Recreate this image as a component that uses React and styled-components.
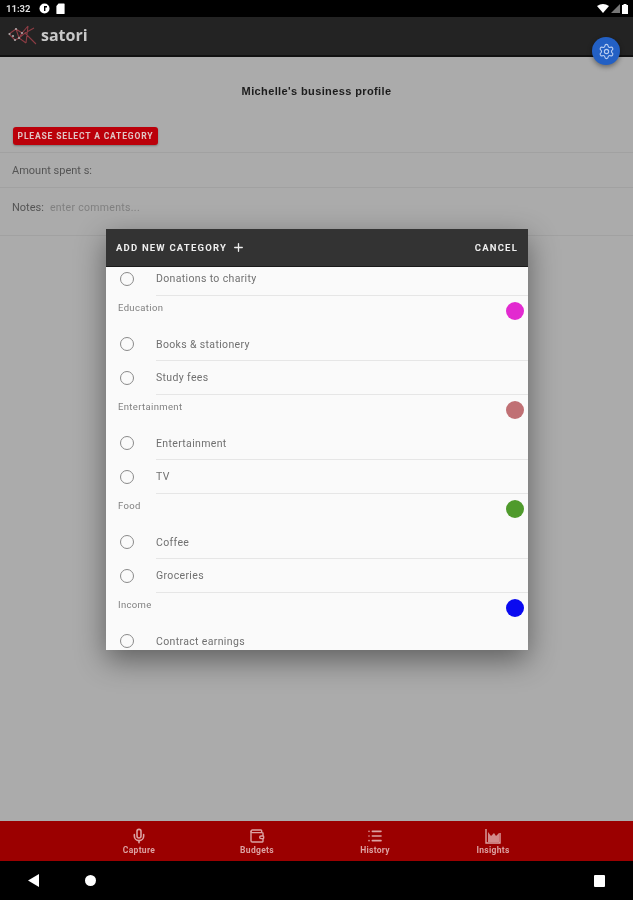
import React from 'react';
import styled, { createGlobalStyle } from 'styled-components';
import { Mic, Wallet, List, Settings, Plus } from 'lucide-react';

const GlobalStyle = createGlobalStyle`
  html, body { margin: 0; padding: 0; background: #000; }
  body { font-family: Roboto, "Liberation Sans", sans-serif; }
  * { box-sizing: border-box; }
`;

const categories = [
  { name: 'Education', color: '#e22ad0', items: ['Books & stationery', 'Study fees'] },
  { name: 'Entertainment', color: '#c07074', items: ['Entertainment', 'TV'] },
  { name: 'Food', color: '#4f9a2c', items: ['Coffee', 'Groceries'] },
  { name: 'Income', color: '#0a0af0', items: ['Contract earnings'] },
];

const navItems = [
  { label: 'Capture', icon: <Mic size={16} strokeWidth={2.4} /> },
  { label: 'Budgets', icon: <Wallet size={16} strokeWidth={2.1} /> },
  { label: 'History', icon: <List size={16} strokeWidth={2.4} /> },
  { label: 'Insights', icon: <InsightsIcon /> },
];

function InsightsIcon() {
  return (
    <svg width="16" height="16" viewBox="0 0 16 16" fill="none">
      <path d="M1 1v14h14V5" stroke="currentColor" strokeWidth="1.4" />
      <path d="M3 14V4l3 4 3-3 2 3 3-3v9z" fill="currentColor" opacity="0.85" />
    </svg>
  );
}

function Logo() {
  return (
    <svg width="29" height="20" viewBox="0 0 29 20" fill="none">
      <g stroke="#8c3c44" strokeWidth="1.1">
        <path d="M1 9l7-5 6 4 6-7M8 4l3 9 7 5M1 9l6 6 4-2 6-5 11 11M14 8l-3 5M20 1l-2 17M17 8l9-5" />
      </g>
      <g fill="#a8a8a8">
        <circle cx="1.5" cy="9" r="1.1" />
        <circle cx="8" cy="4" r="1.1" />
        <circle cx="7" cy="15" r="1.1" />
        <circle cx="14" cy="8" r="1.1" />
        <circle cx="11" cy="13" r="1.1" />
        <circle cx="5" cy="11" r="1.1" />
      </g>
    </svg>
  );
}

export default function App() {
  return (
    <Screen>
      <GlobalStyle />
      <StatusBar>
        <StatusGroup $gap={6}>
          <Clock>11:32</Clock>
          <svg width="11" height="11" viewBox="0 0 11 11">
            <circle cx="5.5" cy="5.5" r="5" fill="#fff" />
            <path d="M5 3h3v1.6H6.4V8H5z" fill="#000" />
          </svg>
          <svg width="9" height="11" viewBox="0 0 9 11">
            <path d="M2.5 0.5H8a.6.6 0 0 1 .6.6v9.3a.6.6 0 0 1-.6.6H1a.6.6 0 0 1-.6-.6V3z" fill="#fff" />
          </svg>
        </StatusGroup>
        <StatusGroup $gap={2}>
          <svg width="12" height="9" viewBox="0 0 12 9">
            <path d="M0 2Q6-2 12 2L6 9z" fill="#fff" />
          </svg>
          <svg width="9" height="9" viewBox="0 0 9 9">
            <path d="M9 0v9H0z" fill="#777" />
          </svg>
          <svg width="6" height="10" viewBox="0 0 6 10">
            <path d="M1.5 0h3v1H6v9H0V1h1.5z" fill="#fff" />
          </svg>
        </StatusGroup>
      </StatusBar>

      <AppBar>
        <Logo />
        <Brand>satori</Brand>
      </AppBar>
      <Fab><Settings size={17} strokeWidth={1.6} /></Fab>

      <Content>
        <ProfileTitle>Michelle's business profile</ProfileTitle>
        <CategoryRow>
          <CategoryButton>Please select a category</CategoryButton>
        </CategoryRow>
        <FieldRow $height={35} $top={11}>
          <FieldLabel>Amount spent s:</FieldLabel>
        </FieldRow>
        <FieldRow $height={48} $top={13}>
          <FieldLabel>Notes:</FieldLabel>
          <Placeholder>enter comments...</Placeholder>
        </FieldRow>

        <Dialog>
          <DialogHeader>
            <HeaderAction>
              Add new category <Plus size={13} strokeWidth={2.4} />
            </HeaderAction>
            <HeaderAction>Cancel</HeaderAction>
          </DialogHeader>
          <CategoryList>
            <Row>
              <Radio />
              <RowText>Donations to charity</RowText>
            </Row>
            {categories.map((cat) => (
              <React.Fragment key={cat.name}>
                <SectionHeader>
                  <SectionLabel>{cat.name}</SectionLabel>
                  <Dot $color={cat.color} />
                </SectionHeader>
                {cat.items.map((item) => (
                  <Row key={item}>
                    <Radio />
                    <RowText>{item}</RowText>
                  </Row>
                ))}
              </React.Fragment>
            ))}
          </CategoryList>
        </Dialog>
      </Content>

      <BottomNav>
        {navItems.map((item) => (
          <NavItem key={item.label}>
            {item.icon}
            <NavLabel>{item.label}</NavLabel>
          </NavItem>
        ))}
      </BottomNav>

      <SystemBar>
        <SystemGroup>
          <svg width="11" height="13" viewBox="0 0 11 13">
            <path d="M11 0v13L0 6.5z" fill="#fff" />
          </svg>
          <HomeDot />
        </SystemGroup>
        <RecentSquare />
      </SystemBar>
    </Screen>
  );
}

const Screen = styled.div`
  position: relative;
  width: 633px;
  height: 900px;
  display: flex;
  flex-direction: column;
  overflow: hidden;
  background: #000;
  filter: blur(0.6px);
`;

const StatusBar = styled.div`
  height: 17px;
  flex: none;
  display: flex;
  align-items: center;
  justify-content: space-between;
  padding: 0 5px 0 6px;
  background: #000;
`;

const StatusGroup = styled.div`
  display: flex;
  align-items: center;
  gap: ${(p) => p.$gap}px;
  &:first-child svg:first-of-type { margin-left: 3px; }
`;

const Clock = styled.span`
  color: #ddd;
  font-size: 9.5px;
  font-weight: 700;
`;

const AppBar = styled.div`
  height: 40px;
  flex: none;
  display: flex;
  align-items: center;
  gap: 4px;
  padding: 0 0 3px 8px;
  background: #232323;
  border-bottom: 2px solid #111;
`;

const Brand = styled.span`
  font-family: "Open Sans", sans-serif;
  font-size: 16px;
  font-weight: 700;
  color: #c8c8c8;
`;

const Fab = styled.div`
  position: absolute;
  left: 592px;
  top: 37px;
  width: 28px;
  height: 28px;
  border-radius: 50%;
  display: flex;
  align-items: center;
  justify-content: center;
  color: #b9cdf0;
  background: #2360c4;
  box-shadow: 0 2px 5px rgba(0, 0, 0, 0.4);
  z-index: 3;
`;

const Content = styled.div`
  position: relative;
  flex: 1;
  background: #ababab;
`;

const ProfileTitle = styled.div`
  height: 70px;
  padding-top: 28px;
  text-align: center;
  font-family: "Liberation Sans", sans-serif;
  font-size: 11px;
  font-weight: 700;
  letter-spacing: 0.38px;
  color: #1c1c1c;
`;

const CategoryRow = styled.div`
  height: 26px;
  padding-left: 13px;
  border-bottom: 1px solid #a1a1a1;
`;

const CategoryButton = styled.div`
  width: 145px;
  height: 18px;
  display: flex;
  align-items: center;
  justify-content: center;
  border-radius: 3px;
  background: #bb000a;
  color: #e0c4c4;
  font-size: 8.5px;
  font-weight: 700;
  letter-spacing: 0.85px;
  text-transform: uppercase;
  box-shadow: 0 1px 2px rgba(0, 0, 0, 0.3);
`;

const FieldRow = styled.div`
  height: ${(p) => p.$height}px;
  display: flex;
  align-items: flex-start;
  gap: 6px;
  padding: ${(p) => p.$top}px 0 0 12px;
  border-bottom: 1px solid #a1a1a1;
`;

const FieldLabel = styled.span`
  font-size: 11px;
  line-height: 13px;
  color: #555;
`;

const Placeholder = styled.span`
  font-size: 10.5px;
  line-height: 13px;
  letter-spacing: 0.3px;
  color: #808080;
`;

const Dialog = styled.div`
  position: absolute;
  left: 106px;
  top: 172px;
  width: 422px;
  height: 421px;
  display: flex;
  flex-direction: column;
  overflow: hidden;
  background: #fafafa;
  box-shadow: 0 10px 28px rgba(0, 0, 0, 0.45);
`;

const DialogHeader = styled.div`
  height: 38px;
  flex: none;
  display: flex;
  align-items: center;
  justify-content: space-between;
  padding: 0 10px;
  background: #333;
  border-bottom: 1px solid #1a1a1a;
`;

const HeaderAction = styled.span`
  display: flex;
  align-items: center;
  gap: 5px;
  color: #eee;
  font-size: 9.5px;
  font-weight: 700;
  letter-spacing: 1.2px;
  text-transform: uppercase;
`;

const CategoryList = styled.div`
  margin-top: -5px;
`;

const Row = styled.div`
  position: relative;
  height: 33.5px;
  flex: none;
  display: flex;
  align-items: center;
  padding-left: 14px;
  &::after {
    content: '';
    position: absolute;
    left: 50px;
    right: 0;
    bottom: 0;
    border-bottom: 1px solid #e6e6e6;
  }
`;

const Radio = styled.span`
  width: 14px;
  height: 14px;
  flex: none;
  border: 1.4px solid #8a8a8a;
  border-radius: 50%;
`;

const RowText = styled.span`
  margin-left: 22px;
  font-size: 10.5px;
  letter-spacing: 0.35px;
  color: #707070;
`;

const SectionHeader = styled.div`
  height: 32px;
  display: flex;
  justify-content: space-between;
  padding: 6px 4px 0 12px;
`;

const SectionLabel = styled.span`
  font-size: 9.5px;
  letter-spacing: 0.35px;
  line-height: 12px;
  color: #808080;
`;

const Dot = styled.span`
  width: 18px;
  height: 18px;
  border-radius: 50%;
  background: ${(p) => p.$color};
`;

const BottomNav = styled.div`
  height: 40px;
  flex: none;
  display: grid;
  grid-template-columns: repeat(4, 118px);
  padding-left: 80px;
  background: #9b0000;
`;

const NavItem = styled.div`
  display: flex;
  flex-direction: column;
  align-items: center;
  justify-content: center;
  gap: 1px;
  color: #dca2a2;
`;

const NavLabel = styled.span`
  font-size: 8.5px;
  font-weight: 700;
  letter-spacing: 0.3px;
`;

const SystemBar = styled.div`
  height: 39px;
  flex: none;
  display: flex;
  align-items: center;
  justify-content: space-between;
  padding: 0 28px 0 28px;
  background: #000;
`;

const SystemGroup = styled.div`
  display: flex;
  align-items: center;
  gap: 46px;
`;

const HomeDot = styled.span`
  width: 11px;
  height: 11px;
  border-radius: 50%;
  background: #fff;
`;

const RecentSquare = styled.span`
  width: 11px;
  height: 12px;
  border-radius: 1px;
  background: #fff;
`;
